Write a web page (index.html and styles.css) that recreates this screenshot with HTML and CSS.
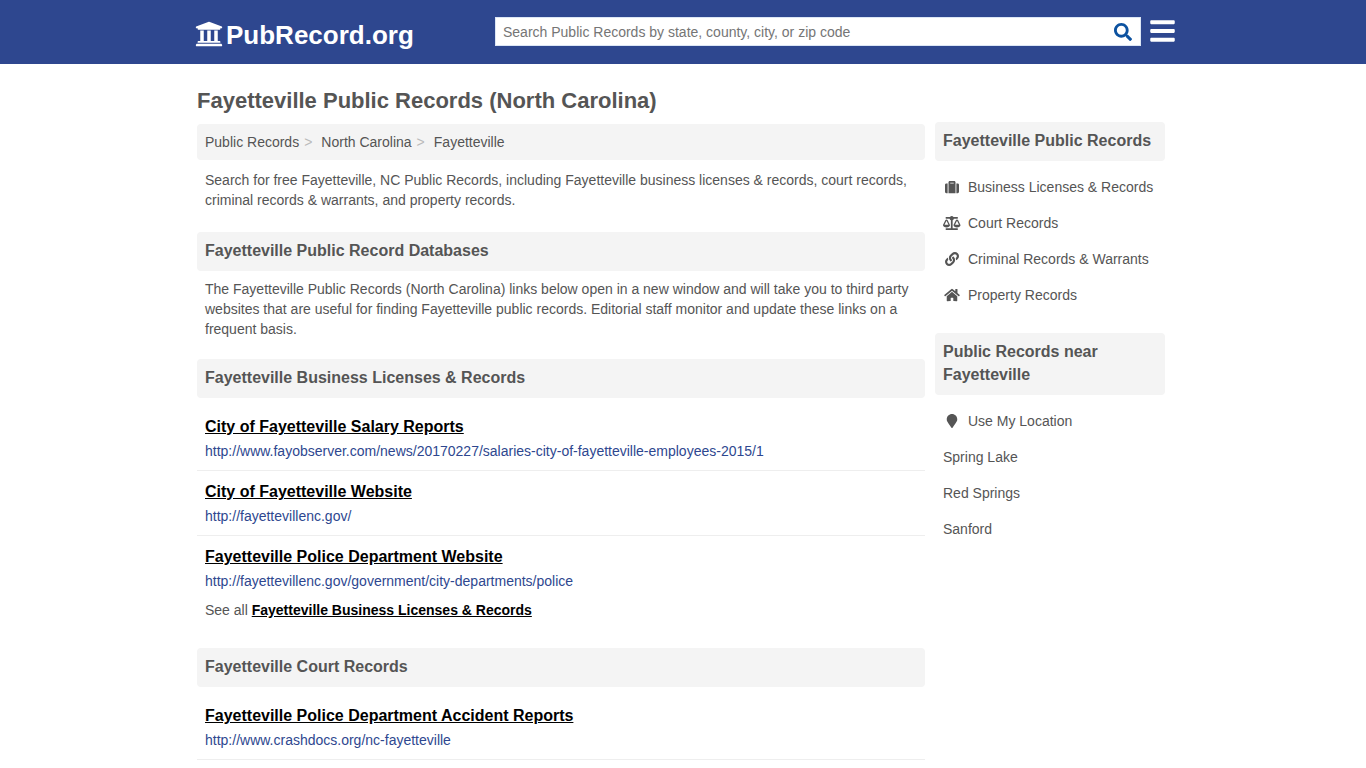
FILE: index.html
```html
<!DOCTYPE html>
<html lang="en">
<head>
<meta charset="utf-8">
<title>Fayetteville Public Records (North Carolina)</title>
<link rel="stylesheet" href="styles.css">
</head>
<body>
<header class="header">
  <div class="bar">
    <a class="logo"><svg viewBox="0 0 512 512"><path d="M496 128v16a8 8 0 0 1-8 8h-24v12c0 6.627-5.373 12-12 12H60c-6.627 0-12-5.373-12-12v-12H24a8 8 0 0 1-8-8v-16a8 8 0 0 1 4.941-7.392l232-88a7.996 7.996 0 0 1 6.118 0l232 88A8 8 0 0 1 496 128zm-24 304H40c-13.255 0-24 10.745-24 24v16a8 8 0 0 0 8 8h464a8 8 0 0 0 8-8v-16c0-13.255-10.745-24-24-24zM96 192v192H60c-6.627 0-12 5.373-12 12v20h416v-20c0-6.627-5.373-12-12-12h-36V192h-64v192h-64V192h-64v192h-64V192H96z"/></svg><span>PubRecord.org</span></a>
    <div class="search"><span>Search Public Records by state, county, city, or zip code</span><svg viewBox="0 0 512 512"><path d="M505 442.700L405.300 343c-4.500-4.500-10.600-7-17-7H372c27.600-35.300 44-79.700 44-128C416 93.100 322.900 0 208 0S0 93.100 0 208s93.100 208 208 208c48.300 0 92.700-16.400 128-44v16.300c0 6.400 2.500 12.500 7 17l99.700 99.700c9.400 9.400 24.600 9.400 33.900 0l28.300-28.300c9.400-9.400 9.400-24.600.1-34zM208 336c-70.700 0-128-57.200-128-128 0-70.700 57.200-128 128-128 70.700 0 128 57.200 128 128 0 70.700-57.200 128-128 128z"/></svg></div>
    <svg class="menu" viewBox="0 0 448 512"><path d="M16 132h416c8.837 0 16-7.163 16-16V76c0-8.837-7.163-16-16-16H16C7.163 60 0 67.163 0 76v40c0 8.837 7.163 16 16 16zm0 160h416c8.837 0 16-7.163 16-16v-40c0-8.837-7.163-16-16-16H16c-8.837 0-16 7.163-16 16v40c0 8.837 7.163 16 16 16zm0 160h416c8.837 0 16-7.163 16-16v-40c0-8.837-7.163-16-16-16H16c-8.837 0-16 7.163-16 16v40c0 8.837 7.163 16 16 16z"/></svg>
  </div>
</header>
<div class="page">
  <main class="main">
    <h1>Fayetteville Public Records (North Carolina)</h1>
    <nav class="crumbs"><a>Public Records</a><b>&gt;</b><a>North Carolina</a><b>&gt;</b><a>Fayetteville</a></nav>
    <p class="intro">Search for free Fayetteville, NC Public Records, including Fayetteville business licenses &amp; records, court records, criminal records &amp; warrants, and property records.</p>
    <h2>Fayetteville Public Record Databases</h2>
    <p class="note">The Fayetteville Public Records (North Carolina) links below open in a new window and will take you to third party websites that are useful for finding Fayetteville public records. Editorial staff monitor and update these links on a frequent basis.</p>
    <h2>Fayetteville Business Licenses &amp; Records</h2>
    <div class="links">
      <div class="item"><a class="title">City of Fayetteville Salary Reports</a><span class="url">http://www.fayobserver.com/news/20170227/salaries-city-of-fayetteville-employees-2015/1</span></div>
      <div class="item"><a class="title">City of Fayetteville Website</a><span class="url">http://fayettevillenc.gov/</span></div>
      <div class="item last"><a class="title">Fayetteville Police Department Website</a><span class="url">http://fayettevillenc.gov/government/city-departments/police</span></div>
    </div>
    <p class="all">See all <a>Fayetteville Business Licenses &amp; Records</a></p>
    <h2>Fayetteville Court Records</h2>
    <div class="links">
      <div class="item"><a class="title">Fayetteville Police Department Accident Reports</a><span class="url">http://www.crashdocs.org/nc-fayetteville</span></div>
    </div>
  </main>
  <aside class="side">
    <h2>Fayetteville Public Records</h2>
    <ul>
      <li><svg viewBox="0 0 512 512"><path d="M128 480h256V80c0-26.500-21.500-48-48-48H176c-26.500 0-48 21.500-48 48v400zm64-384h128v32H192V96zm320 80v256c0 26.500-21.500 48-48 48h-48V128h48c26.500 0 48 21.500 48 48zM96 480H48c-26.500 0-48-21.500-48-48V176c0-26.500 21.500-48 48-48h48v352z"/></svg>Business Licenses &amp; Records</li>
      <li><svg class="wide" viewBox="0 0 640 512"><path d="M256 336h-.020c0-16.180 1.340-8.730-85.050-181.510-17.650-35.290-68.190-35.360-85.870 0C-2.060 328.750.020 320.330.020 336H0c0 44.180 57.310 80 128 80s128-35.820 128-80zM128 176l72 144H56l72-144zm511.980 160c0-16.180 1.340-8.730-85.050-181.510-17.650-35.290-68.190-35.360-85.870 0-87.120 174.260-85.040 165.840-85.040 181.510H384c0 44.180 57.310 80 128 80s128-35.820 128-80h-.020zM440 320l72-144 72 144H440zm88 128H352V153.250c23.510-10.290 41.160-31.480 46.390-57.250H528c8.840 0 16-7.160 16-16V48c0-8.840-7.160-16-16-16H383.640C369.040 12.680 346.090 0 320 0s-49.040 12.680-63.640 32H112c-8.840 0-16 7.160-16 16v32c0 8.840 7.160 16 16 16h129.610c5.230 25.760 22.870 46.960 46.390 57.250V448H112c-8.840 0-16 7.160-16 16v32c0 8.840 7.160 16 16 16h416c8.840 0 16-7.160 16-16v-32c0-8.840-7.160-16-16-16z"/></svg>Court Records</li>
      <li><svg viewBox="0 0 512 512"><path d="M326.612 185.391c59.747 59.809 58.927 155.698.360 214.590-.110.120-.240.250-.360.370l-67.200 67.200c-59.270 59.270-155.699 59.262-214.960 0-59.270-59.260-59.270-155.700 0-214.960l37.106-37.106c9.840-9.840 26.786-3.300 27.294 10.606.648 17.722 3.826 35.527 9.690 52.721 1.986 5.822.567 12.262-3.783 16.612l-13.087 13.087c-28.026 28.026-28.905 73.660-1.155 101.960 28.024 28.579 74.086 28.749 102.325.510l67.200-67.190c28.191-28.191 28.073-73.757 0-101.830-3.701-3.694-7.429-6.564-10.341-8.569a16.037 16.037 0 0 1-6.947-12.606c-.396-10.567 3.348-21.456 11.698-29.806l21.054-21.055c5.521-5.521 14.182-6.199 20.584-1.731a152.482 152.482 0 0 1 20.522 17.197zM467.547 44.449c-59.261-59.262-155.690-59.270-214.960 0l-67.200 67.200c-.120.120-.250.250-.360.370-58.566 58.892-59.387 154.781.360 214.590a152.454 152.454 0 0 0 20.521 17.196c6.402 4.468 15.064 3.789 20.584-1.731l21.054-21.055c8.350-8.350 12.094-19.239 11.698-29.806a16.037 16.037 0 0 0-6.947-12.606c-2.912-2.005-6.640-4.875-10.341-8.569-28.073-28.073-28.191-73.639 0-101.830l67.200-67.190c28.239-28.239 74.300-28.069 102.325.510 27.750 28.300 26.872 73.934-1.155 101.960l-13.087 13.087c-4.350 4.350-5.769 10.790-3.783 16.612 5.864 17.194 9.042 34.999 9.690 52.721.509 13.906 17.454 20.446 27.294 10.606l37.106-37.106c59.271-59.259 59.271-155.699.001-214.959z"/></svg>Criminal Records &amp; Warrants</li>
      <li><svg viewBox="0 0 576 512" class="home"><path d="M280.370 148.260L96 300.110V464a16 16 0 0 0 16 16l112.060-.290a16 16 0 0 0 15.920-16V368a16 16 0 0 1 16-16h64a16 16 0 0 1 16 16v95.640a16 16 0 0 0 16 16.050L464 480a16 16 0 0 0 16-16V300L295.670 148.260a12.190 12.190 0 0 0-15.300 0zM571.600 251.470L488 182.560V44.050a12 12 0 0 0-12-12h-56a12 12 0 0 0-12 12v72.610L318.470 43a48 48 0 0 0-61 0L4.340 251.470a12 12 0 0 0-1.600 16.900l25.500 31A12 12 0 0 0 45.150 301l235.220-193.740a12.190 12.190 0 0 1 15.300 0L530.900 301a12 12 0 0 0 16.900-1.600l25.500-31a12 12 0 0 0-1.700-16.930z"/></svg>Property Records</li>
    </ul>
    <h2>Public Records near Fayetteville</h2>
    <ul>
      <li><svg viewBox="-64 0 512 512"><path d="M172.268 501.670C26.970 291.031 0 269.413 0 192 0 85.961 85.961 0 192 0s192 85.961 192 192c0 77.413-26.970 99.031-172.268 309.670-9.535 13.774-29.930 13.773-39.464 0z"/></svg>Use My Location</li>
      <li>Spring Lake</li>
      <li>Red Springs</li>
      <li>Sanford</li>
    </ul>
  </aside>
</div>
</body>
</html>
```
FILE: styles.css
```css
* { box-sizing: border-box; }
html { overflow: hidden; }
body { margin: 0; background: #fff; color: #555; font: 14px/20px "Liberation Sans", Arial, sans-serif; }
h1, h2, p, ul { margin: 0; padding: 0; }
ul { list-style: none; }
svg { fill: currentColor; flex: none; }
.header { height: 64px; background: #2e478f; }
.bar { width: 980px; margin-left: 195px; display: flex; align-items: flex-start; }
.logo { display: flex; width: 300px; padding-top: 19px; color: #fff; font: bold 26px/32px "Liberation Sans", Arial, sans-serif; }
.logo svg { width: 28px; height: 28px; margin: 0.5px 3px 0 0; }
.search { width: 646px; height: 29px; margin-top: 17px; padding: 0 8px 0 7px; background: #fff; border: 1px solid #dce6f5; display: flex; align-items: center; justify-content: space-between; color: #757575; }
.search svg { width: 18px; height: 18px; color: #0c52a0; }
.menu { width: 25px; height: 28px; margin: 16.5px 0 0 9px; color: #fff; }
.page { width: 968px; margin-left: 197px; display: flex; gap: 10px; }
.main { width: 728px; }
h1 { font-size: 22px; line-height: 30px; padding-top: 22px; height: 60px; }
.crumbs { height: 36px; padding: 8px; background: #f4f4f4; border-radius: 4px; display: flex; }
.crumbs b { font-weight: normal; color: #bbb; margin: 0 9px 0 5px; }
.intro { padding: 10px 8px 22px; }
.note { padding: 8px 8px 20px; }
h2 { font-size: 16px; line-height: 23px; padding: 7px 8px 9px; background: #f4f4f4; border-radius: 4px; }
.links { padding-top: 8px; }
.item { height: 65px; padding: 9px 8px 0; border-bottom: 1px solid #eee; display: flex; flex-direction: column; align-items: flex-start; }
.last { height: 64px; border: 0; }
.title { font-size: 16px; line-height: 24px; font-weight: bold; color: #000; text-decoration: underline; }
.url { margin-top: 2px; color: #2e478f; }
.all { padding: 0 8px 28px; }
.all a { font-weight: bold; color: #000; text-decoration: underline; }
.side { width: 230px; padding-top: 58px; }
.side ul { padding: 8px 8px 20px; }
.side li { height: 36px; display: flex; align-items: center; white-space: nowrap; }
.side svg { width: 14px; height: 14px; margin: 0 9px 0 2px; }
.side svg.wide { width: 17.500px; margin: 0 7.500px 0 0; }
.side svg.home { width: 16px; margin: 0 8px 0 1px; }
```
